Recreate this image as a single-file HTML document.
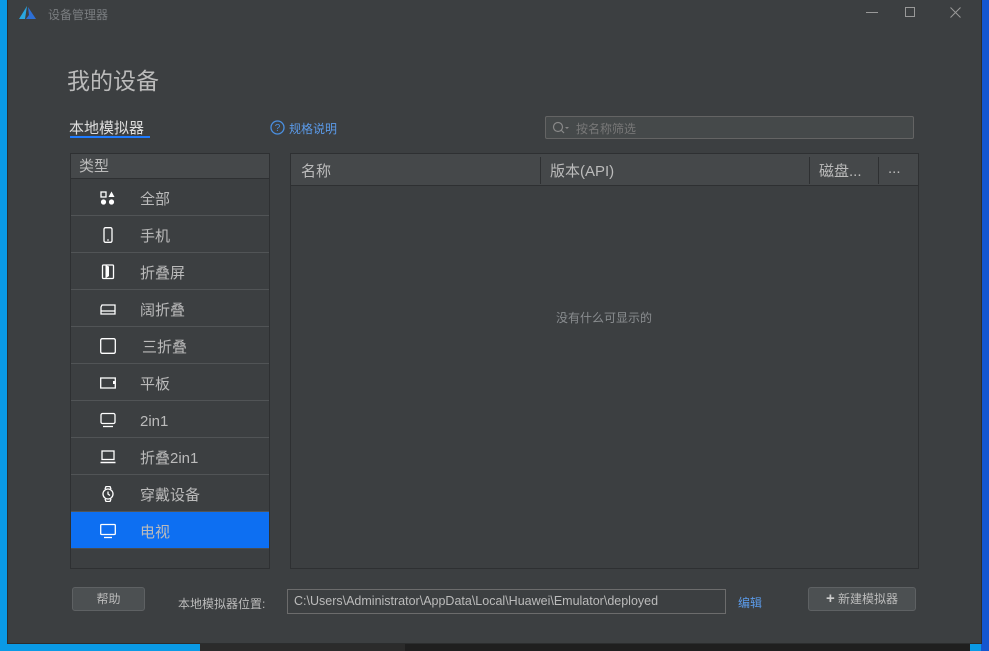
<!DOCTYPE html>
<html><head><meta charset="utf-8"><style>
*{margin:0;padding:0;box-sizing:border-box}
body{width:989px;height:651px;overflow:hidden;background:#0a9ae6;font-family:"Liberation Sans","Noto Sans CJK SC",sans-serif;position:relative}
.abs{position:absolute}
#win{left:8px;top:0;width:973px;height:643px;background:#3c3f41;box-shadow:0 0 0 1px #2b2d2e}
.t{color:#bbbbbb}
.row{position:absolute;left:0;width:198px;height:37px;border-bottom:1px solid #515456;color:#bbbbbb;font-size:15px}
.row span{position:absolute;left:69px;top:2px;line-height:37px}
.row svg{position:absolute;left:29px;top:11px}
.btn{position:absolute;background:#4c5052;border:1px solid #5e6163;border-radius:3px;color:#bbbbbb;font-size:12px;text-align:center}
</style></head><body>
<div class="abs" style="left:981px;top:0;width:8px;height:651px;background:#1456d0"></div>
<div class="abs" style="left:200px;top:643px;width:205px;height:8px;background:#2b2b2b"></div>
<div class="abs" style="left:405px;top:643px;width:565px;height:8px;background:#1f1f1f"></div>
<div id="win" class="abs">
 <svg class="abs" style="left:11px;top:6px" width="18" height="14" viewBox="0 0 18 14"><path d="M8 0 L0 13 H6 Z" fill="#2aa7e0"/><path d="M9 1 L17 13 H7 L10 9 Z" fill="#2d6fd6"/></svg>
 <div class="abs" style="left:40px;top:6px;font-size:12px;color:#7a7d80">设备管理器</div>
 <div class="abs" style="left:858px;top:12px;width:12px;height:1px;background:#999"></div>
 <div class="abs" style="left:897px;top:7px;width:10px;height:10px;border:1px solid #999"></div>
 <svg class="abs" style="left:942px;top:7px" width="11" height="11" viewBox="0 0 11 11"><path d="M0.5 0.5 L10.5 10.5 M10.5 0.5 L0.5 10.5" stroke="#999" stroke-width="1"/></svg>
 <div class="abs t" style="left:59px;top:62px;font-size:23px">我的设备</div>
 <div class="abs" style="left:61px;top:117px;font-size:15px;color:#dddddd">本地模拟器</div>
 <div class="abs" style="left:62px;top:136px;width:80px;height:2px;background:#1e7bff"></div>
 <svg class="abs" style="left:262px;top:120px" width="15" height="15" viewBox="0 0 15 15"><circle cx="7.5" cy="7.5" r="6.5" fill="none" stroke="#4a90e2" stroke-width="1.3"/><text x="7.5" y="11" font-size="10" fill="#4a90e2" text-anchor="middle" font-family="Liberation Sans">?</text></svg>
 <div class="abs" style="left:281px;top:120px;font-size:12px;color:#5b9bea">规格说明</div>
 <div class="abs" style="left:537px;top:116px;width:369px;height:23px;background:#45494a;border:1px solid #646464;border-radius:2px"></div>
 <svg class="abs" style="left:544px;top:121px" width="20" height="14" viewBox="0 0 20 14"><circle cx="6" cy="6" r="4.5" fill="none" stroke="#888" stroke-width="1.2"/><path d="M9 9 L12 12" stroke="#888" stroke-width="1.2"/><path d="M13 6 H17 L15 8 Z" fill="#888"/></svg>
 <div class="abs" style="left:568px;top:120px;font-size:12px;color:#787878">按名称筛选</div>

 <div class="abs" style="left:62px;top:153px;width:200px;height:416px;border:1px solid #2e3032;background:#3c3f41">
  <div class="abs t" style="left:0;top:0;width:198px;height:25px;background:#45484a;border-bottom:1px solid #2e3032;font-size:15px;padding:1px 0 0 8px">类型</div>
  <div class="row" style="top:25px"><svg width="16" height="16" viewBox="0 0 16 16"><rect x="1" y="2" width="5" height="5" fill="none" stroke="#fff" stroke-width="1.3"/><path d="M11.5 1.5 L14.5 7 H8.5Z" fill="#fff"/><circle cx="3.5" cy="12" r="2.6" fill="#fff"/><circle cx="11.5" cy="12" r="2.6" fill="#fff"/></svg><span>全部</span></div>
  <div class="row" style="top:62px"><svg width="16" height="16" viewBox="0 0 16 16"><rect x="4" y="0.7" width="8" height="14.6" rx="1.5" fill="none" stroke="#fff" stroke-width="1.3"/><path d="M7 13 H9" stroke="#fff"/></svg><span>手机</span></div>
  <div class="row" style="top:99px"><svg width="16" height="16" viewBox="0 0 16 16"><rect x="2.5" y="1" width="11" height="13.5" rx="1" fill="none" stroke="#fff" stroke-width="1.3"/><path d="M5.5 1 V14.5 L9 12 V2.5Z" fill="#fff"/></svg><span>折叠屏</span></div>
  <div class="row" style="top:136px"><svg width="16" height="16" viewBox="0 0 16 16"><path d="M2 4 H15 V13 H1 V6Z" fill="none" stroke="#fff" stroke-width="1.3"/><path d="M1 10 H15" stroke="#fff" stroke-width="1.3"/></svg><span>阔折叠</span></div>
  <div class="row" style="top:173px"><svg width="16" height="16" viewBox="0 0 16 16"><rect x="0.7" y="0.7" width="14.6" height="14.6" rx="1.5" fill="none" stroke="#fff" stroke-width="1.3"/></svg><span style="left:71px">三折叠</span></div>
  <div class="row" style="top:210px"><svg width="16" height="16" viewBox="0 0 16 16"><rect x="0.7" y="3" width="14.6" height="10" fill="none" stroke="#fff" stroke-width="1.3"/><rect x="13" y="6" width="2" height="3" fill="#fff"/></svg><span>平板</span></div>
  <div class="row" style="top:247px"><svg width="16" height="16" viewBox="0 0 16 16"><rect x="1" y="1.5" width="14" height="10" rx="1.5" fill="none" stroke="#fff" stroke-width="1.3"/><path d="M3 14.5 H13" stroke="#fff" stroke-width="1.3"/></svg><span>2in1</span></div>
  <div class="row" style="top:284px"><svg width="16" height="16" viewBox="0 0 16 16"><rect x="2" y="2" width="12" height="8.5" fill="none" stroke="#fff" stroke-width="1.3"/><path d="M0.5 13.5 H15.5" stroke="#fff" stroke-width="1.5"/></svg><span>折叠2in1</span></div>
  <div class="row" style="top:321px"><svg width="16" height="16" viewBox="0 0 16 16"><circle cx="8" cy="8" r="5" fill="none" stroke="#fff" stroke-width="1.3"/><path d="M5 3 L6 0.5 H10 L11 3 M5 13 L6 15.5 H10 L11 13 M8 5.5 V8 L10 9.5" fill="none" stroke="#fff" stroke-width="1.3"/></svg><span>穿戴设备</span></div>
  <div class="row" style="top:358px;background:#0d6ff2;border-bottom:1px solid #4a4d4f"><svg width="16" height="16" viewBox="0 0 16 16"><rect x="0.7" y="1.5" width="14.6" height="10" rx="1" fill="none" stroke="#fff" stroke-width="1.3"/><path d="M4 14.5 H12" stroke="#fff" stroke-width="1.3"/></svg><span>电视</span></div>
 </div>

 <div class="abs" style="left:282px;top:153px;width:629px;height:416px;border:1px solid #2e3032;background:#3c3f41">
  <div class="abs t" style="left:0;top:0;width:627px;height:32px;background:#45484a;border-bottom:1px solid #2e3032;font-size:15px">
   <div class="abs" style="left:10px;top:6px">名称</div>
   <div class="abs" style="left:249px;top:3px;width:1px;height:27px;background:#2e3032"></div>
   <div class="abs" style="left:259px;top:6px">版本(API)</div>
   <div class="abs" style="left:518px;top:3px;width:1px;height:27px;background:#2e3032"></div>
   <div class="abs" style="left:528px;top:6px">磁盘...</div>
   <div class="abs" style="left:587px;top:3px;width:1px;height:27px;background:#2e3032"></div>
   <div class="abs" style="left:597px;top:6px">...</div>
  </div>
  <div class="abs" style="left:265px;top:155px;font-size:12px;color:#8a8d90">没有什么可显示的</div>
 </div>

 <div class="btn" style="left:64px;top:587px;width:73px;height:24px;line-height:22px">帮助</div>
 <div class="abs t" style="left:170px;top:595px;font-size:12px">本地模拟器位置:</div>
 <div class="abs t" style="left:279px;top:589px;width:439px;height:25px;border:1px solid #6c6c6c;font-size:12.5px;padding:4px 0 0 6px">C:\Users\Administrator\AppData\Local\Huawei\Emulator\deployed</div>
 <div class="abs" style="left:730px;top:594px;font-size:12px;color:#5b9bea">编辑</div>
 <div class="btn" style="left:800px;top:587px;width:108px;height:24px;line-height:22px"><b style="font-size:15px;color:#ccc">+</b> 新建模拟器</div>
</div>
</body></html>
